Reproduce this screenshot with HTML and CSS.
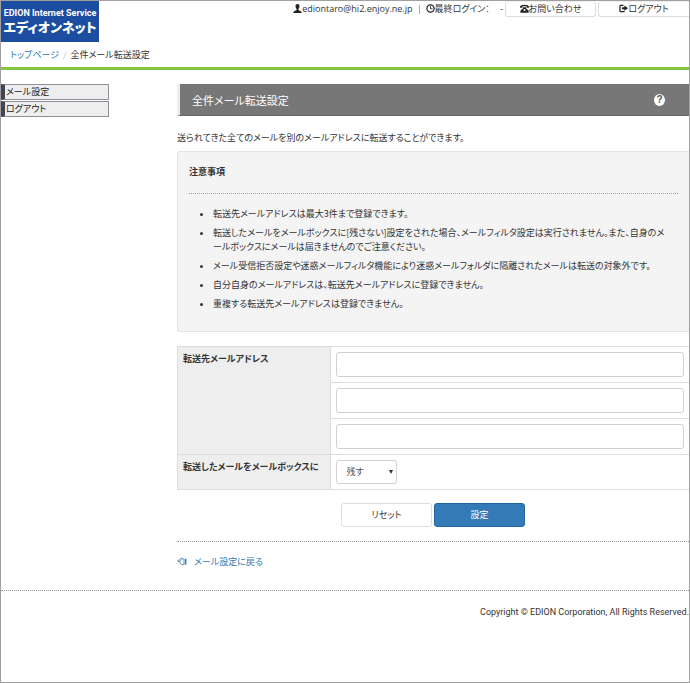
FILE: index.html
```html
<!DOCTYPE html>
<html lang="ja">
<head>
    <meta charset="UTF-8">
    <meta name="viewport" content="width=device-width, initial-scale=1.0">
    <title>全件メール転送設定</title>
    <link rel="stylesheet" href="styles.css">
</head>
<body>
    <header class="header">
        <a class="logo" href="#">
            <span class="logo-sub">EDION Internet Service</span>
            <span class="logo-main">エディオンネット</span>
        </a>
        <div class="user-bar">
            <span class="user-mail"><svg class="icon" viewBox="0 0 10 10"><path d="M5 0C3.300 0 2.700 1.200 2.800 2.800C2.900 4 3.400 5 4 5.600V6.600C3 7.400.4 7.700.2 10H9.800C9.600 7.700 7 7.400 6 6.600V5.600C6.600 5 7.100 4 7.200 2.800C7.300 1.200 6.700 0 5 0Z" fill="currentColor"/></svg>ediontaro@hi2.enjoy.ne.jp</span>
            <span class="separator"></span>
            <span class="last-login"><svg class="icon" viewBox="0 0 10 10"><circle cx="5" cy="5" r="4" fill="none" stroke="currentColor" stroke-width="1.400"/><path d="M5 2.400V5.300H7.200" fill="none" stroke="currentColor"/></svg>最終ログイン：</span>
            <span class="login-date">-</span>
            <button type="button" class="btn btn-top"><svg class="icon" viewBox="0 0 10 10"><path d="M0 3.400C0 0 10 0 10 3.400V4.200H7.400V2.900C6 2.400 4 2.400 2.600 2.900V4.200H0Z" fill="currentColor"/><path d="M3.300 3.600H6.700V4.600L9.600 7.500V9.600H.4V7.500L3.300 4.600Z" fill="currentColor"/><circle cx="5" cy="6.700" r="1.200" fill="#fff"/></svg>お問い合わせ</button>
            <button type="button" class="btn btn-top btn-last"><svg class="icon" viewBox="0 0 10 10"><path d="M5 1.400H2.200Q1.100 1.400 1.100 2.500V7.500Q1.100 8.600 2.200 8.600H5.500V7.500" fill="none" stroke="currentColor" stroke-width="1.400"/><path d="M6 1.700L10 4.600L6 7.500V5.700H3.300V3.500H6Z" fill="currentColor"/></svg>ログアウト</button>
        </div>
    </header>

    <nav class="breadcrumb">
        <a href="#">トップページ</a>
        <span class="slash">/</span>
        <span>全件メール転送設定</span>
    </nav>

    <div class="container">
        <nav class="side-menu">
            <a href="#">メール設定</a>
            <a href="#">ログアウト</a>
        </nav>

        <main class="content">
            <div class="page-title">
                <h1>全件メール転送設定</h1>
                <a class="help" href="#" aria-label="ヘルプ">?</a>
            </div>

            <p class="lead">送られてきた全てのメールを別のメールアドレスに転送することができます。</p>

            <section class="notice">
                <h2>注意事項</h2>
                <ul>
                    <li>転送先メールアドレスは最大3件まで登録できます。</li>
                    <li>転送したメールをメールボックスに[残さない]設定をされた場合、メールフィルタ設定は実行されません。また、自身のメールボックスにメールは届きませんのでご注意ください。</li>
                    <li>メール受信拒否設定や迷惑メールフィルタ機能により迷惑メールフォルダに隔離されたメールは転送の対象外です。</li>
                    <li>自分自身のメールアドレスは、転送先メールアドレスに登録できません。</li>
                    <li>重複する転送先メールアドレスは登録できません。</li>
                </ul>
            </section>

            <form>
                <table class="form-table">
                    <tr>
                        <th rowspan="3" scope="rowgroup"><label for="address1">転送先メールアドレス</label></th>
                        <td><input type="text" id="address1" class="form-control"></td>
                    </tr>
                    <tr>
                        <td><input type="text" class="form-control" aria-label="転送先メールアドレス2"></td>
                    </tr>
                    <tr>
                        <td><input type="text" class="form-control" aria-label="転送先メールアドレス3"></td>
                    </tr>
                    <tr>
                        <th scope="row"><label for="keep">転送したメールをメールボックスに</label></th>
                        <td>
                            <div class="select-wrap">
                                <select id="keep" class="form-control">
                                    <option>残す</option>
                                    <option>残さない</option>
                                </select>
                            </div>
                        </td>
                    </tr>
                </table>

                <div class="form-buttons">
                    <button type="reset" class="btn btn-form">リセット</button>
                    <button type="button" class="btn btn-form btn-primary">設定</button>
                </div>
            </form>

            <div class="back">
                <a href="#"><svg class="icon-hand" viewBox="0 0 12 10"><path d="M8.500 2H6.500L5.300.7Q4.400.8 4.700 2.300L5 3.300H1.300Q.3 4.200 1.300 5H3.500L4 7.500L5.500 8.800H8.500Z" fill="none" stroke="currentColor"/><path d="M10.500 1.800V9" stroke="currentColor" stroke-width="1.600"/></svg>メール設定に戻る</a>
            </div>
        </main>
    </div>

    <footer class="footer">Copyright © EDION Corporation, All Rights Reserved.</footer>
</body>
</html>
```
FILE: styles.css
```css
* {
    box-sizing: border-box;
}

body {
    margin: 0;
    min-height: 100vh;
    border: 1px solid #a0a0a0;
    background-color: #fff;
    color: #333;
    font-family: "Noto Sans CJK JP", sans-serif;
    font-size: 9px;
    line-height: 14px;
    font-feature-settings: "palt";
    overflow-x: hidden;
}

a {
    color: #337ab7;
    text-decoration: none;
}

button,
input,
select {
    font: inherit;
    font-feature-settings: inherit;
    color: inherit;
}

/* Header */
.header {
    display: flex;
    justify-content: space-between;
    align-items: flex-start;
}

.logo {
    display: flex;
    flex-direction: column;
    align-items: center;
    width: 98px;
    height: 41px;
    padding-top: 5px;
    background-color: #1c4da1;
    color: #fff;
    font-weight: bold;
    white-space: nowrap;
}

.logo-sub {
    font-family: Roboto, sans-serif;
    font-size: 9px;
}

.logo-main {
    font-size: 13px;
    font-weight: 900;
}

.user-bar {
    display: flex;
    align-items: center;
    white-space: nowrap;
}

.icon {
    width: 9px;
    height: 9px;
    vertical-align: -1px;
    color: #222;
}

.user-mail {
    font-family: "Open Sans", sans-serif;
    font-size: 9px;
}

.separator {
    width: 1px;
    height: 9px;
    margin: 0 6px;
    background-color: #aaa;
}

.login-date {
    margin: 0 2px 0 10px;
}

.btn {
    padding: 0;
    border: 1px solid #ddd;
    border-radius: 3px;
    background-color: #fff;
    cursor: pointer;
}

.btn-top {
    width: 91px;
    height: 16px;
    border-top-color: #eee;
    line-height: 12px;
}

.btn-last {
    margin-left: 2px;
    border-right: 0;
    border-radius: 3px 0 0 3px;
}

/* Breadcrumb */
.breadcrumb {
    display: flex;
    gap: 4px;
    padding: 6px 9px 5px;
    border-bottom: 3px solid #85c441;
}

.breadcrumb .slash {
    color: #ccc;
}

/* Two columns */
.container {
    display: grid;
    grid-template-columns: 108px 1fr;
    gap: 68px;
    padding-top: 14px;
}

.side-menu {
    display: flex;
    flex-direction: column;
    gap: 1px;
}

.side-menu a {
    height: 16px;
    padding-left: 1px;
    border: 1px solid #8e8e96;
    border-left: 4px solid #434354;
    background-color: #eee;
    color: #222;
}

.page-title {
    display: flex;
    justify-content: space-between;
    align-items: center;
    height: 32px;
    padding: 0 24px 0 12px;
    border-left: 3px solid #eee;
    border-bottom: 1px solid #666;
    background-color: #777;
    color: #fff;
}

.page-title h1 {
    margin: 0;
    font-size: 11px;
    font-weight: normal;
}

.help {
    width: 11px;
    height: 12px;
    border-radius: 50%;
    background-color: #fff;
    color: #555;
    font-family: "Liberation Sans", sans-serif;
    font-size: 10px;
    font-weight: bold;
    line-height: 12px;
    text-align: center;
}

.lead {
    margin: 15px 0 6px;
}

/* Notice box */
.notice {
    min-height: 181px;
    padding: 13px 11px;
    border: 1px solid #e3e3e3;
    border-right: 0;
    border-radius: 3px 0 0 3px;
    background-color: #f4f4f4;
}

.notice h2 {
    margin: 0;
    padding-bottom: 14px;
    border-bottom: 1px dotted #999;
    font-size: 9px;
}

.notice ul {
    display: flex;
    flex-direction: column;
    gap: 5px;
    margin: 13px 0 0;
    padding: 0 8px 0 24px;
}

/* Form */
.form-table {
    width: 100%;
    margin-top: 14px;
    border-collapse: collapse;
}

.form-table th,
.form-table td {
    padding: 5px;
    border: 1px solid #ddd;
    border-right: 0;
}

.form-table th {
    width: 30%;
    background-color: #eee;
    text-align: left;
    vertical-align: top;
    white-space: nowrap;
}

.form-control {
    display: block;
    width: 100%;
    height: 25px;
    padding: 0 9px;
    border: 1px solid #d0d0d0;
    border-radius: 3px;
    background-color: #fff;
}

.select-wrap {
    position: relative;
    width: 61px;
}

.select-wrap select {
    height: 24px;
    appearance: none;
    color: #555;
}

.select-wrap::after {
    content: "";
    position: absolute;
    top: 10px;
    right: 4px;
    border: 2px solid transparent;
    border-top: 4px solid #333;
    pointer-events: none;
}

.form-buttons {
    display: flex;
    justify-content: center;
    gap: 2px;
    padding: 13px 0 14px;
    border-bottom: 1px dotted #999;
}

.btn-form {
    width: 91px;
    height: 24px;
}

.btn-primary {
    border-color: #2265a3;
    background-color: #337ab7;
    color: #fff;
}

.back {
    padding: 13px 0 21px;
}

.icon-hand {
    width: 10px;
    height: 9px;
    margin-right: 7px;
    vertical-align: -1px;
}

.footer {
    padding-top: 14px;
    border-top: 1px dotted #999;
    font-family: Roboto, sans-serif;
    font-size: 9px;
    text-align: right;
}
```
